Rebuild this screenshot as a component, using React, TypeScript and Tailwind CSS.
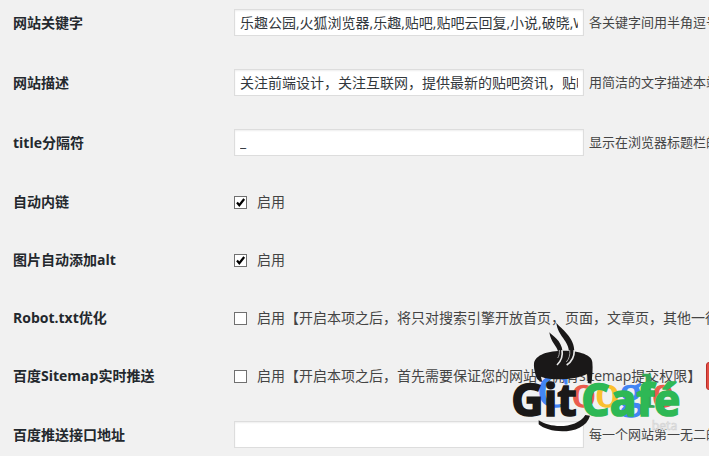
import { ReactNode } from "react";

type RowProps = {
    label: string;
    htmlFor: string;
    children: ReactNode;
};

type TextFieldProps = {
    id: string;
    label: string;
    value?: string;
    hint: string;
};

type CheckFieldProps = {
    id: string;
    label: string;
    text: string;
    checked?: boolean;
    children?: ReactNode;
};

function Row({ label, htmlFor, children }: RowProps) {
    return (
        <div className="flex items-center">
            <label htmlFor={htmlFor} className="w-[221px] shrink-0 text-sm font-bold text-[#23282d]">
                {label}
            </label>
            {children}
        </div>
    );
}

function TextField({ id, label, value, hint }: TextFieldProps) {
    return (
        <div className="pb-[33px] last:pb-0">
            <Row label={label} htmlFor={id}>
                <input
                    id={id}
                    type="text"
                    defaultValue={value}
                    className="h-[27px] w-[350px] shrink-0 border border-[#ddd] bg-white px-[5px] pb-[2px] text-sm text-[#32373c] shadow-[inset_0_1px_2px_rgba(0,0,0,0.07)] outline-none"
                />
                <span className="ml-[5px] text-[13px] whitespace-nowrap">{hint}</span>
            </Row>
        </div>
    );
}

function CheckField({ id, label, text, checked, children }: CheckFieldProps) {
    return (
        <div className="h-[58px]">
            <Row label={label} htmlFor={id}>
                <span className="grid size-[13px] shrink-0 items-center">
                    <input
                        id={id}
                        type="checkbox"
                        defaultChecked={checked}
                        className="peer col-start-1 row-start-1 size-[13px] appearance-none border border-[#707070] bg-white"
                    />
                    <svg viewBox="0 0 13 13" className="pointer-events-none invisible col-start-1 row-start-1 size-[13px] peer-checked:visible">
                        <path d="M3 6.5 L5.3 9.2 L10.2 3" fill="none" stroke="#000" strokeWidth="2.2" />
                    </svg>
                </span>
                <label htmlFor={id} className="ml-[10px] h-[26px] text-sm leading-[26px] whitespace-nowrap">
                    {text}
                </label>
                {children}
            </Row>
        </div>
    );
}

function Watermark() {
    return (
        <svg
            viewBox="150 60 525 342"
            role="img"
            aria-label="GitCafé beta"
            className="pointer-events-none absolute top-[320px] left-[510px] w-[175px]"
        >
            {/* Google */}
            <g fontFamily="'Liberation Serif', serif" fontSize="141" strokeWidth="4">
                <text x="234" y="320" fill="#4285f4" stroke="#4285f4">G</text>
                <text x="336" y="320" fill="#ea5b4d" stroke="#ea5b4d">o</text>
                <text x="407" y="320" fill="#fbc02d" stroke="#fbc02d">o</text>
                <text x="478" y="320" fill="#4285f4" stroke="#4285f4">g</text>
                <text x="545" y="320" fill="#34a853" stroke="#34a853">l</text>
                <text x="577" y="320" fill="#ea5b4d" stroke="#ea5b4d">e</text>
            </g>

            {/* Steam */}
            <path d="M268 97 C278 108 304 120 308 155 L295 158 C292 138 272 128 268 97Z" fill="#1a1818" />
            <path d="M289 68 C303 86 345 112 343 157 L327 159 C328 122 293 108 289 68Z" fill="#1a1818" />

            {/* Cup */}
            <path
                d="M222 190 C226 164 264 152 311 152 C359 152 397 165 397 187 C399 207 397 229 394 251 L383 249 C384 239 384 231 381 222 C348 240 276 243 243 230 L246 244 C234 243 229 235 226 223 C223 211 221 200 222 190Z"
                fill="#1a1818"
            />
            <path d="M306 150 C309 168 305 182 291 195" fill="none" stroke="#e8e8e8" strokeWidth="5" />
            <path d="M298 150 C299 160 297 168 293 174" fill="none" stroke="#e8e8e8" strokeWidth="2" />
            <path d="M343 150 C343 170 336 185 320 195" fill="none" stroke="#e8e8e8" strokeWidth="5" />
            <path d="M329 150 C331 165 327 177 319 186" fill="none" stroke="#e8e8e8" strokeWidth="2" />

            {/* Saucer */}
            <path d="M236 361 C275 387 351 385 376 345 L390 347 C374 406 269 403 236 373Z" fill="#1a1818" />

            <g fontFamily="'Open Sans', sans-serif" fontWeight="700" fontSize="134" strokeWidth="5">
                <text x="154" y="349" fill="#1a1818" stroke="#1a1818">Git</text>
                <text x="364" y="349" fill="#2eb855" stroke="#2eb855">Café</text>
            </g>
            <text
                x="575"
                y="390"
                fontFamily="'Open Sans', sans-serif"
                fontSize="37"
                fill="#f4f4f4"
                stroke="#d4d4d4"
                strokeWidth="2"
            >
                beta
            </text>
        </svg>
    );
}

export default function App() {
    return (
        <main className="relative min-h-screen overflow-hidden bg-[#f1f1f1] pt-[9px] pl-[13px] font-['Open_Sans','Noto_Sans_CJK_SC',sans-serif] text-[#444]">
            <form>
                <TextField
                    id="keywords"
                    label="网站关键字"
                    value="乐趣公园,火狐浏览器,乐趣,贴吧,贴吧云回复,小说,破晓,WordPress"
                    hint="各关键字间用半角逗号"
                />
                <TextField
                    id="description"
                    label="网站描述"
                    value="关注前端设计，关注互联网，提供最新的贴吧资讯，贴吧"
                    hint="用简洁的文字描述本站"
                />
                <TextField id="separator" label="title分隔符" value="_" hint="显示在浏览器标题栏的" />
                <CheckField id="autolink" label="自动内链" text="启用" checked />
                <CheckField id="imagealt" label="图片自动添加alt" text="启用" checked />
                <CheckField
                    id="robots"
                    label="Robot.txt优化"
                    text="启用【开启本项之后，将只对搜索引擎开放首页，页面，文章页，其他一律"
                />
                <CheckField
                    id="sitemap"
                    label="百度Sitemap实时推送"
                    text="启用【开启本项之后，首先需要保证您的网站已拥有sitemap提交权限】"
                >
                    <button
                        type="button"
                        aria-label="查看"
                        className="-my-1 ml-[5px] h-7 w-20 shrink-0 rounded-[3px] border border-[#b92c28] bg-[#e14d43]"
                    />
                </CheckField>
                <TextField id="pushurl" label="百度推送接口地址" hint="每一个网站第一无二的" />
            </form>
            <Watermark />
        </main>
    );
}
